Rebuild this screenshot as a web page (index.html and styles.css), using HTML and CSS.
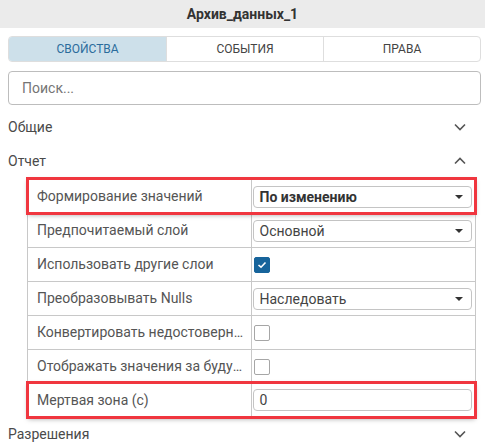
FILE: index.html
```html
<!doctype html>
<html lang="ru">
  <head>
    <title>Архив_данных_1</title>
    <meta charset="UTF-8">
    <link rel="stylesheet" href="styles.css">
  </head>
  <body>
    <div class="titleBar">Архив_данных_1</div>

    <div class="panel">
      <div class="tabs">
        <div class="tab active">Свойства</div>
        <div class="tab">События</div>
        <div class="tab">Права</div>
      </div>

      <div class="search">Поиск...</div>

      <div class="section firstSection">
        <span>Общие</span>
        <svg class="chevron" width="12" height="8" viewBox="0 0 12 8"><polyline points="1,1.5 6,6.5 11,1.5"/></svg>
      </div>

      <div class="section">
        <span>Отчет</span>
        <svg class="chevron" width="12" height="8" viewBox="0 0 12 8"><polyline points="1,6.5 6,1.5 11,6.5"/></svg>
      </div>

      <div class="propTable">
        <div class="propRow marked">
          <div class="propLabel">Формирование значений</div>
          <div class="propValue">
            <div class="select bold"><span>По изменению</span><span class="caret"></span></div>
          </div>
        </div>
        <div class="propRow">
          <div class="propLabel">Предпочитаемый слой</div>
          <div class="propValue">
            <div class="select"><span>Основной</span><span class="caret"></span></div>
          </div>
        </div>
        <div class="propRow">
          <div class="propLabel">Использовать другие слои</div>
          <div class="propValue">
            <span class="check checked">
              <svg width="10" height="8" viewBox="0 0 10 8"><polyline points="1.5,4 4,6.2 8.5,1.5"/></svg>
            </span>
          </div>
        </div>
        <div class="propRow">
          <div class="propLabel">Преобразовывать Nulls</div>
          <div class="propValue">
            <div class="select"><span>Наследовать</span><span class="caret"></span></div>
          </div>
        </div>
        <div class="propRow">
          <div class="propLabel">Конвертировать недостоверные значения</div>
          <div class="propValue"><span class="check"></span></div>
        </div>
        <div class="propRow">
          <div class="propLabel">Отображать значения за будущее время</div>
          <div class="propValue"><span class="check"></span></div>
        </div>
        <div class="propRow marked">
          <div class="propLabel">Мертвая зона (с)</div>
          <div class="propValue">
            <div class="textInput">0</div>
          </div>
        </div>
      </div>

      <div class="section">
        <span>Разрешения</span>
        <svg class="chevron" width="12" height="8" viewBox="0 0 12 8"><polyline points="1,1.5 6,6.5 11,1.5"/></svg>
      </div>
    </div>
  </body>
</html>
```

FILE: styles.css
```css
body {
  margin: 0;
  font-family: Roboto, "Noto Sans", sans-serif;
  background: #fff;
  color: #444;
}

.titleBar {
  height: 28px;
  line-height: 28px;
  background-color: #ebebeb;
  text-align: center;
  font-size: 14px;
  font-weight: bold;
  color: #333;
}

.panel {
  padding: 8px 4px 0 8px;
}

.tabs {
  display: grid;
  grid-template-columns: 1fr 1fr 1fr;
  height: 26px;
  border: 1px solid #dedede;
  border-radius: 4px;
  overflow: hidden;
  box-sizing: border-box;
}

.tab {
  display: flex;
  align-items: center;
  justify-content: center;
  font-size: 12px;
  text-transform: uppercase;
  color: #444;
  border-left: 1px solid #dedede;
}

.tab:first-child {
  border-left: none;
}

.tab.active {
  background-color: #cde0ea;
  color: #2b6c9c;
}

.search {
  margin-top: 9px;
  height: 34px;
  box-sizing: border-box;
  border: 1px solid #bdbdbd;
  border-radius: 4px;
  padding: 0 13px;
  display: flex;
  align-items: center;
  font-size: 14px;
  color: #757575;
}

.section {
  height: 34px;
  display: flex;
  align-items: center;
  justify-content: space-between;
  padding-right: 15px;
  font-size: 14px;
  color: #4a4a4a;
}

.firstSection {
  margin-top: 5px;
}

.chevron polyline {
  fill: none;
  stroke: #555;
  stroke-width: 1.6;
}

.propTable {
  margin: 1px 5px 0 19px;
  border-left: 1px solid #c8c8c8;
  border-right: 1px solid #c8c8c8;
}

.propRow {
  display: grid;
  grid-template-columns: 1fr 1fr;
  height: 34px;
  border-top: 1px solid #c8c8c8;
  box-sizing: border-box;
}

.propRow:last-child {
  border-bottom: 1px solid #c8c8c8;
}

.propRow.marked {
  outline: 3px solid #f0363f;
  outline-offset: -1px;
  box-shadow: 0 2px 5px rgba(0, 0, 0, 0.35);
  position: relative;
}

.propLabel {
  padding: 0 4px 0 9px;
  font-size: 14px;
  color: #555;
  line-height: 33px;
  white-space: nowrap;
  overflow: hidden;
  text-overflow: ellipsis;
  border-right: 1px solid #c8c8c8;
}

.propValue {
  display: flex;
  align-items: center;
  padding: 0 3px 0 1px;
}

.select,
.textInput {
  flex: 1;
  height: 22px;
  box-sizing: border-box;
  border: 1px solid #c4c4c4;
  border-radius: 4px;
  padding: 0 8px 0 6px;
  display: flex;
  align-items: center;
  justify-content: space-between;
  font-size: 14px;
  color: #444;
}

.select.bold {
  font-weight: bold;
  color: #333;
}

.caret {
  width: 0;
  height: 0;
  border-left: 4px solid transparent;
  border-right: 4px solid transparent;
  border-top: 4px solid #333;
}

.check {
  width: 16px;
  height: 16px;
  box-sizing: border-box;
  border: 1px solid #a6a6a6;
  border-radius: 2px;
  margin-left: 1px;
  display: flex;
  align-items: center;
  justify-content: center;
}

.check.checked {
  background-color: #17649b;
  border-color: #17649b;
}

.check polyline {
  fill: none;
  stroke: #fff;
  stroke-width: 1.6;
}
```
